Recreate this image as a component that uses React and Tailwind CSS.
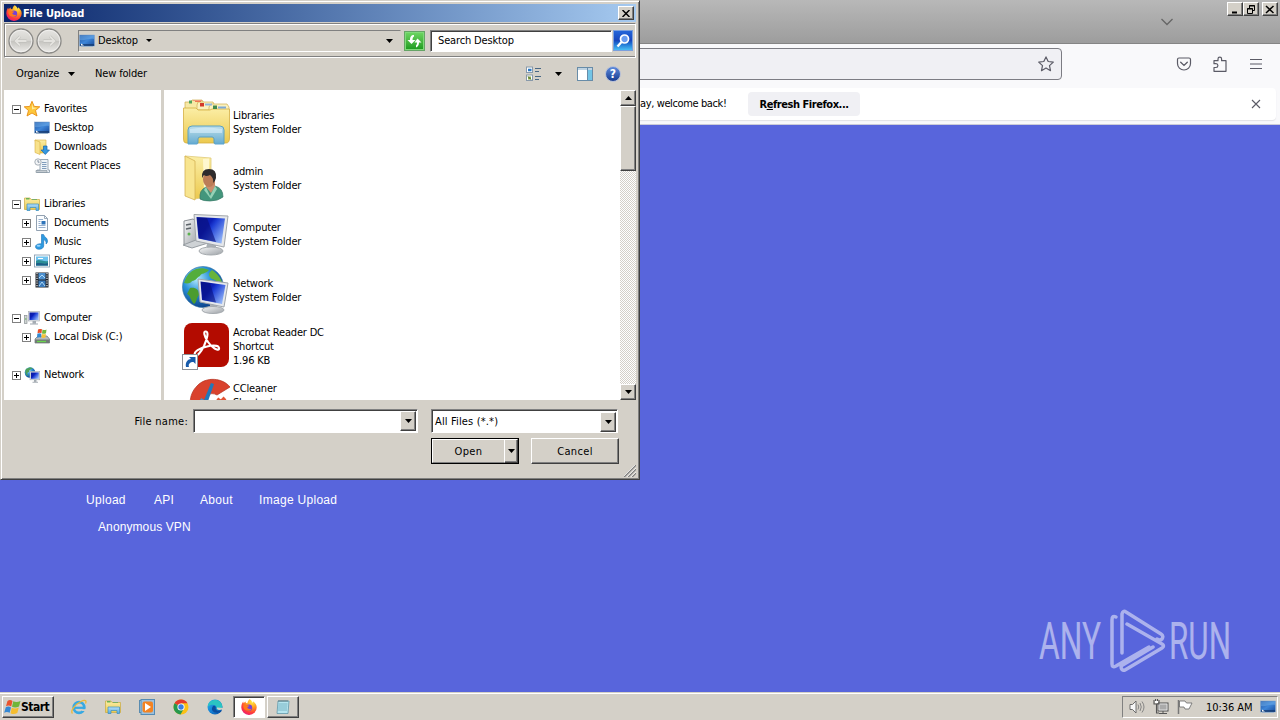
import React from "react";

const ui = "font-['DejaVu_Sans_Condensed','DejaVu_Sans',sans-serif] text-[11px] leading-[14px] text-black whitespace-nowrap";
const raised = "border border-t-white border-l-white border-r-[#404040] border-b-[#404040] bg-[#d4d0c8] shadow-[inset_-1px_-1px_0_#808080]";
const sunken = "border border-t-[#808080] border-l-[#808080] border-r-white border-b-white shadow-[inset_1px_1px_0_#404040]";

const Svg = ({ s = 16, w, h, className = "", children, vb }) => (
  <svg width={w || s} height={h || s} viewBox={vb || `0 0 ${s} ${s}`} className={`block shrink-0 ${className}`} fill="none">{children}</svg>
);

const Down = ({ className = "" }) => (
  <Svg w={7} h={4} vb="0 0 7 4" className={className}><path d="M0 0H7L3.5 4Z" fill="#000" /></Svg>
);

const Defs = () => (
  <svg width="0" height="0" className="absolute">
    <defs>
      <linearGradient id="screen" x1="0" y1="0" x2="1" y2="0.7"><stop offset="0" stopColor="#0a1a9c" /><stop offset=".42" stopColor="#0c1fb8" /><stop offset=".55" stopColor="#1f40d6" /><stop offset="1" stopColor="#8fb2f6" /></linearGradient>
      <linearGradient id="desk" x1="0" y1="0" x2="1" y2="1"><stop offset="0" stopColor="#1c4f9e" /><stop offset=".5" stopColor="#3f86d8" /><stop offset="1" stopColor="#174a9b" /></linearGradient>
      <linearGradient id="folder" x1="0" y1="0" x2="0" y2="1"><stop offset="0" stopColor="#fbeea6" /><stop offset="1" stopColor="#ecc94e" /></linearGradient>
      <linearGradient id="stand" x1="0" y1="0" x2="0" y2="1"><stop offset="0" stopColor="#b5def7" /><stop offset="1" stopColor="#58a9df" /></linearGradient>
      <radialGradient id="globe" cx=".35" cy=".3" r=".75"><stop offset="0" stopColor="#b4ecff" /><stop offset=".45" stopColor="#2a92d8" /><stop offset="1" stopColor="#0a3c86" /></radialGradient>
      <radialGradient id="foxr" cx=".7" cy=".15" r=".95"><stop offset="0" stopColor="#fff04a" /><stop offset=".4" stopColor="#ff9a1f" /><stop offset=".75" stopColor="#ff3b3b" /><stop offset="1" stopColor="#e31587" /></radialGradient>
      <linearGradient id="edge" x1="0" y1="0" x2="1" y2="1"><stop offset="0" stopColor="#2fb7e8" /><stop offset=".5" stopColor="#1481d6" /><stop offset="1" stopColor="#0b4ea2" /></linearGradient>
      <linearGradient id="silver" x1="0" y1="0" x2="1" y2="1"><stop offset="0" stopColor="#f6f7f8" /><stop offset="1" stopColor="#9ba0a5" /></linearGradient>
      <linearGradient id="navbtn" x1="0" y1="0" x2="0" y2="1"><stop offset="0" stopColor="#e6e5e2" /><stop offset=".48" stopColor="#d4d3cf" /><stop offset=".52" stopColor="#c6c5c1" /><stop offset="1" stopColor="#eeedea" /></linearGradient>
    </defs>
  </svg>
);

const Firefox = ({ s = 16 }) => (
  <Svg s={s} vb="0 0 16 16">
    <path d="M8.600 .3c1.900 1 2.700 2.400 3 3.600l.4-1.700c2.200 1.500 3.700 3.600 3.700 6.200A7.600 7.600 0 0 1 8 16 7.600 7.600 0 0 1 .3 8.500c0-2.600.8-4.500 1.900-6l.4 1.800c.6-.8 1.300-1.400 2.300-1.800l-.2 1.500 1.700.2c.3-1.500 1-3 2.200-3.900z" fill="url(#foxr)" />
    <circle cx="8" cy="8.700" r="3.200" fill="#7540d8" />
    <path d="M2.500 6.200c1.100-.8 2.600-.7 3.700 0l2 .3c.3.8-1.900 1.100-1.900 2 .4 1.500 2.700 1.900 4.300.9-.7 2.400-4 3.100-6.200 1.600C2.700 10 2.200 8 2.500 6.200Z" fill="#ff7a1a" />
  </Svg>
);
const Desktop = () => (
  <Svg><rect x=".5" y="2" width="15" height="11" fill="url(#desk)" stroke="#89a9cd" strokeWidth=".6" /><path d="M1 2.500H15V6C10 5 5 8 1 7Z" fill="#72afea" opacity=".5" /><path d="M1 12H15" stroke="#163b70" strokeWidth="1.500" /><path d="M2 10.500L5 12.500H2Z" fill="#fff" /><path d="M2 13.500H14" stroke="#9bb3cc" /></Svg>
);
const Star = () => (
  <Svg><path d="M8 .3L10.200 5.400L15.800 5.800L11.500 9.500L13 15L8 12L3 15L4.500 9.500L.2 5.800L5.800 5.400Z" fill="#fdc73c" stroke="#e88d13" strokeWidth=".9" /><path d="M8 2.500L9.200 6.500L13 7L8 8.500Z" fill="#ffeba0" /></Svg>
);
const Downloads = () => (
  <Svg><path d="M1 1H12V14H4Z" fill="url(#folder)" stroke="#d9b042" strokeWidth=".6" /><path d="M1 1L6 3V15.500L1 13.500Z" fill="#f8e28c" stroke="#d9b042" strokeWidth=".6" /><path d="M9.500 7H13V11H15.500L11.300 15.500L7 11H9.500Z" fill="#3498e0" stroke="#1766ac" strokeWidth=".7" /></Svg>
);
const Recent = () => (
  <Svg><path d="M6 1.500H14V12H15.500V14.500H3V12H6Z" fill="#eef3f8" stroke="#8798a8" strokeWidth=".8" /><path d="M8 4.500H12.500M8 6.500H12.500M8 8.500H12.500M8 10.500H12.500" stroke="#6487ac" strokeWidth=".8" /><path d="M2 12.500H13V14.500H2Z" fill="#c5ccd2" stroke="#808d99" strokeWidth=".6" /><circle cx="4" cy="4" r="3.200" fill="#f3f5f7" stroke="#949ea8" strokeWidth=".8" /><path d="M4 2V4.200H5.500" stroke="#56677c" strokeWidth=".7" /></Svg>
);
const LibSmall = () => (
  <Svg><path d="M.5 2H6L7 3.500H15.500V13.500H.5Z" fill="url(#folder)" stroke="#c9a941" strokeWidth=".7" /><path d="M2 2.800H5.500" stroke="#4aa84a" strokeWidth="1.200" /><path d="M8 3.500H13" stroke="#7cae64" strokeWidth="1" /><path d="M3 8H14.500V14.500H12V11.500H6V14.500H3Z" fill="url(#stand)" stroke="#398fbe" strokeWidth=".7" /></Svg>
);
const Doc = () => (
  <Svg><path d="M2.500 .5H10.500L13.500 3.500V15.500H2.500Z" fill="#fbfdff" stroke="#8797a9" strokeWidth=".9" /><path d="M10.500 .5V3.500H13.500" stroke="#8797a9" strokeWidth=".8" /><path d="M4.500 4.500H9M4.500 6.500H6.500M4.500 8.500H6.500M4.500 10.500H11.500M4.500 12.500H11.500" stroke="#7f9cc0" strokeWidth=".8" /><rect x="7.500" y="6" width="4" height="3.500" fill="#2e74ba" /></Svg>
);
const Music = () => (
  <Svg><path d="M7.500 .5H9.500C10 3 13.500 3.500 13.500 7C13.500 8.500 12.800 9.500 12 10C12.600 7.500 11 6 9.700 5.600V12C9.500 14 7.500 15.300 5 15.300C2.800 15.300 1.500 14.300 1.500 12.800C1.500 11 3.500 9.500 7.500 9.800Z" fill="#2e9ae0" stroke="#1671b8" strokeWidth=".6" /><ellipse cx="4.600" cy="11.800" rx="2" ry="1" fill="#95d4ff" /></Svg>
);
const Pictures = () => (
  <Svg><rect x=".5" y="2" width="15" height="12" fill="#fff" stroke="#8aa0b4" strokeWidth=".9" /><rect x="2" y="3.500" width="12" height="9" fill="#6fc3ef" /><path d="M2 8C5 5.500 9 9 14 8V12.500H2Z" fill="#2c8e96" /><path d="M2 10.500C6 9 10 12 14 10V12.500H2Z" fill="#1d5d87" /><path d="M4 5.500H9" stroke="#fff" /></Svg>
);
const Videos = () => (
  <Svg><rect x="1.500" y=".5" width="13" height="15" fill="#20242b" /><rect x="4.500" y="1" width="7" height="6.500" fill="#4d90cf" /><rect x="4.500" y="8.500" width="7" height="6.500" fill="#3a7abb" /><path d="M5 6L8 3L11 6M5 14L8 10L11 14" stroke="#b1dbf6" /><path d="M3 1V15.500M13 1V15.500" stroke="#eee" strokeWidth="1.200" strokeDasharray="1.200 1.200" /></Svg>
);
const PcSmall = () => (
  <Svg><rect x="0.500" y="5.500" width="2.500" height="8" fill="#cfd6d2" stroke="#8a9196" strokeWidth=".7" /><path d="M1 9H2.500" stroke="#5bb24d" /><path d="M8.500 11H12V14H8.500Z" fill="#a4abb2" /><path d="M6 14H14" stroke="#b4bac0" strokeWidth="1.300" /><rect x="4.500" y="1.500" width="11" height="9.500" fill="#dfe3e8" stroke="#a5abb1" strokeWidth=".6" /><rect x="5.500" y="2.500" width="9" height="7.500" fill="url(#screen)" /></Svg>
);
const NetSmall = () => (
  <Svg><circle cx="6" cy="5.500" r="5.300" fill="url(#globe)" /><path d="M2 2C4 .5 7 0 9 1C7 2.500 5 2.500 5 5L3 6L4.500 9C1.500 8 .5 5 2 2Z" fill="#4da05a" /><path d="M10 12H12.500V15H10Z" fill="#a4abb2" /><path d="M8.500 15.300H14" stroke="#b4bac0" strokeWidth="1.200" /><rect x="6" y="4.500" width="9.800" height="8.300" fill="#dfe3e8" stroke="#a5abb1" strokeWidth=".6" /><rect x="7" y="5.500" width="7.800" height="6.300" fill="url(#screen)" /></Svg>
);
const Pc = () => (
  <Svg s={48}>
    <path d="M2 11L11 9L16 12V32L7 37L2 34Z" fill="url(#silver)" stroke="#8c9196" />
    <path d="M4 15L9 14M4 19L9 18" stroke="#5d646a" strokeWidth="1.500" /><circle cx="7" cy="24" r="1.500" fill="#5cb24f" />
    <path d="M1 35L14 30L26 33L10 38Z" fill="#ced2d5" stroke="#979da2" />
    <path d="M25 33L34 35V40H24Z" fill="#aab0b5" />
    <ellipse cx="29" cy="41" rx="12" ry="4" fill="url(#silver)" stroke="#a4a9ad" />
    <path d="M12 4.500L46 6L42 37L14 31Z" fill="#e5e7ea" stroke="#a1a6ab" />
    <path d="M14.500 7L43 8.500L39.500 33.500L16.500 28.500Z" fill="url(#screen)" />
    <path d="M15 7.500L25 8L34 32L17 28.300Z" fill="#09107e" opacity=".65" />
  </Svg>
);
const Disk = () => (
  <Svg><path d="M1 10L4 7H13L15.500 10V14H1Z" fill="#b5babd" stroke="#6c7478" strokeWidth=".7" /><path d="M1 10.500H15.500V14H1Z" fill="#717b76" /><path d="M3 12.500H12" stroke="#69d54d" strokeWidth="1.300" /><path d="M4 .5Q6 -.5 8 .3L7.500 4.200Q5.500 3.300 3.500 4.300Z" fill="#e8512b" /><path d="M8.500 .5Q10.500 1.500 12.500 .5L12 4.300Q10 5.300 8 4.400Z" fill="#75b83b" /><path d="M3.300 4.800Q5.300 3.900 7.400 4.800L7 8.500Q5 7.700 3 8.700Z" fill="#3189d2" /><path d="M7.900 4.900Q10 5.800 11.900 4.900L11.400 8.600Q9.500 9.500 7.500 8.600Z" fill="#f6c337" /></Svg>
);
const Net = () => (
  <Svg s={48}>
    <circle cx="21" cy="21" r="20.500" fill="url(#globe)" stroke="#2d6f9f" strokeWidth=".6" />
    <path d="M10 5C14 2 21 1 27 4C24 8 19 7 18 10C15 11 14 15 10 15C9 17 6 18 2 17C4 11 6 8 10 5Z" fill="#54ad3b" />
    <path d="M30 4C36 8 40 13 41 20C36 18 35 14 30 13C26 10 26 7 30 4Z" fill="#68b43b" /><path d="M8 22C13 21 17 23 17 29C14 32 15 36 12 38C8 34 9 30 5 28Z" fill="#4b9c2f" />
    <path d="M28 37H35V43H28Z" fill="#adb2b7" /><ellipse cx="31" cy="44" rx="11" ry="3.500" fill="url(#silver)" stroke="#a5aaaf" />
    <path d="M16 13L46 17L42 41L18 36Z" fill="#e5e8ec" stroke="#9fa5ab" />
    <path d="M18.500 15.500L43.500 19L40 38L20 34Z" fill="url(#screen)" /><path d="M19 16L28 17L34 36.500L20.500 33.800Z" fill="#09107e" opacity=".6" />
  </Svg>
);

const LibBig = () => (
  <Svg s={48}>
    <path d="M3 4H9L10 2H20L22 5V12H3Z" fill="#f7e9a5" stroke="#cfae4e" strokeWidth=".7" />
    <path d="M15 7L16 4H31L33 8V12H15Z" fill="#fbf1bd" stroke="#cfae4e" strokeWidth=".7" />
    <path d="M27 9L29 6H45L47 9V14H27Z" fill="#fbf1bd" stroke="#cfae4e" strokeWidth=".7" />
    <path d="M1.500 10H14L16 12H28L30 11H47.500V40Q47.500 45 44 45H4Q1.500 45 1.500 41Z" fill="url(#folder)" stroke="#d4af43" strokeWidth=".8" />
    <path d="M11 2.500H20" stroke="#ef9a7a" strokeWidth="1" /><rect x="7" y="2.500" width="3" height="3" fill="#51a35b" /><path d="M13 3.500H19" stroke="#ef7651" strokeWidth="1" /><rect x="18" y="5" width="4" height="3.500" fill="#d3382a" /><path d="M23 6.500H30" stroke="#92b5da" strokeWidth="2" /><rect x="31" y="7.500" width="4" height="3.500" fill="#428a4d" /><path d="M36 9.500H44" stroke="#7faad4" strokeWidth="2" />
    <path d="M10 28H38Q42 28 42 32V46H33Q32 46 32 44V41Q32 39 30 39H18Q16 39 16 41V44Q16 46 15 46H6V32Q6 28 10 28Z" fill="url(#stand)" stroke="#4b9ccc" opacity=".9" />
    <path d="M8 31Q24 28 40 31V35H8Z" fill="#e1f4ff" opacity=".55" />
  </Svg>
);
const Admin = () => (
  <Svg s={48}>
    <path d="M3 2L29 4V42L13 45Z" fill="url(#folder)" stroke="#e0ca7a" strokeWidth=".8" />
    <path d="M21 5L27 4.500V38H22Z" fill="#fff7ce" />
    <path d="M3 2L13 7V46L3 42Z" fill="#f8e590" stroke="#d4b354" strokeWidth=".8" />
    <path d="M18 45Q17 36 24 33L33 32Q41 34 41 43Q36 47 28 47Q21 47 18 45Z" fill="#43967c" stroke="#397a69" strokeWidth=".7" />
    <path d="M24 33L29 39L33 33V27H24Z" fill="#c98e6d" /><path d="M24 33L28 42L33 32L35 35L29 45L22 36Z" fill="#94d1b5" />
    <ellipse cx="27" cy="25.500" rx="6" ry="7.500" fill="#bc7c57" />
    <path d="M20 24Q19 15 27 15Q35 15 34 24Q33 28 31 29Q32 24 28 21Q24 23 22 21Z" fill="#2e2b2c" />
  </Svg>
);
const Acrobat = () => (
  <Svg s={48}>
    <rect x="2" y="1" width="45" height="44" rx="8" fill="#b30b00" />
    <path d="M13 33C11 30 18 26 25 24.500C33 22.500 38 24 37 27C36 29 30 26 26 20C22 14 21 9 24 9.500C27 10 25 17 22 24C19 30 15 35 13 33Z" stroke="#fff" strokeWidth="2.100" />
    <g><rect x=".5" y="32.500" width="15" height="15" fill="#fff" stroke="#8d9298" /><path d="M4 45C3 40 6 37 9 37L7 35H13.500V42L11.500 40C8 40 6 42 7 45Z" fill="#175bab" /></g>
  </Svg>
);
const CCleaner = () => (
  <Svg s={48}>
    <path d="M48 9C41 0 24 -2 15 8C6 17 7 30 12 38L23 28C21 18 28 13 35 17Z" fill="#d9422d" stroke="#b3301f" strokeWidth=".7" />
    <path d="M29 5L32 6L24 29L20 27Z" fill="#2278ba" /><path d="M19 20L27 25L22 40H11Z" fill="#3f93cf" />
    <path d="M20 24L16 35" stroke="#c0e2f7" strokeWidth="2" /><path d="M35 21L39 24L43 20" stroke="#e25435" strokeWidth="4" />
  </Svg>
);

const tree = [
  { n: "Favorites", i: Star, e: "-", l: 0 },
  { n: "Desktop", i: Desktop, l: 1 },
  { n: "Downloads", i: Downloads, l: 1 },
  { n: "Recent Places", i: Recent, l: 1 },
  null,
  { n: "Libraries", i: LibSmall, e: "-", l: 0 },
  { n: "Documents", i: Doc, e: "+", l: 1 },
  { n: "Music", i: Music, e: "+", l: 1 },
  { n: "Pictures", i: Pictures, e: "+", l: 1 },
  { n: "Videos", i: Videos, e: "+", l: 1 },
  null,
  { n: "Computer", i: PcSmall, e: "-", l: 0 },
  { n: "Local Disk (C:)", i: Disk, e: "+", l: 1 },
  null,
  { n: "Network", i: NetSmall, e: "+", l: 0 },
];

const files = [
  { i: LibBig, t: ["Libraries", "System Folder"] },
  { i: Admin, t: ["admin", "System Folder"] },
  { i: Pc, t: ["Computer", "System Folder"] },
  { i: Net, t: ["Network", "System Folder"] },
  { i: Acrobat, t: ["Acrobat Reader DC", "Shortcut", "1.96 KB"] },
  { i: CCleaner, t: ["CCleaner", "Shortcut", "\u00a0"] },
];

const Expander = ({ e }) => (
  <Svg s={9}><rect x=".5" y=".5" width="8" height="8" fill="#fff" stroke="#808080" /><path d={e === "+" ? "M2 4.500H7M4.500 2V7" : "M2 4.500H7"} stroke="#000" /></Svg>
);

const NavButton = ({ d }) => (
  <Svg s={26}><circle cx="13" cy="13" r="12" fill="url(#navbtn)" stroke="#8b8a87" strokeWidth="1.300" /><circle cx="13" cy="13" r="10.800" stroke="#f4f3f1" strokeWidth=".8" /><path d={d} stroke="#bcbbb7" strokeWidth="2.800" /><path d={d} stroke="#e4e3df" strokeWidth="1.800" /></Svg>
);

const ScrollButton = ({ up }) => (
  <div className={`${raised} flex h-4 w-4 shrink-0 items-center justify-center`}><Down className={up ? "rotate-180" : ""} /></div>
);

const Combo = ({ className, children }) => (
  <div className={`${sunken} ${className} flex h-[24px] items-center justify-between bg-white pl-[3px] pr-px`}>
    <span>{children}</span>
    <div className={`${raised} flex h-[20px] w-[16px] items-center justify-center`}><Down /></div>
  </div>
);

const Dialog = () => (
  <div className={`${ui} absolute left-0 top-0 flex h-[480px] w-[640px] flex-col border border-b-[#404040] border-l-[#d4d0c8] border-r-[#404040] border-t-[#d4d0c8] bg-[#d4d0c8] px-[3px] pt-[3px] shadow-[inset_1px_1px_0_#fff,inset_-1px_-1px_0_#808080]`}>
    <div className="flex h-[18px] shrink-0 items-center bg-linear-to-r from-[#0a246a] to-[#a6caf0] pl-[2px] pr-[2px]">
      <Firefox />
      <span className="ml-px flex-1 pt-px font-bold tracking-[-0.15px] text-white">File Upload</span>
      <div className={`${raised} flex h-[14px] w-4 items-center justify-center`}><Svg w={8} h={7} vb="0 0 8 7"><path d="M.5 0L7.500 7M7.500 0L.5 7" stroke="#000" strokeWidth="1.500" /></Svg></div>
    </div>
    <div className="mt-px flex h-[35px] shrink-0 items-center border border-b-white border-l-[#808080] border-r-white border-t-[#808080] pl-[3px] shadow-[inset_0_-1px_0_#808080,inset_1px_1px_0_#fff]">
      <div className="flex items-center gap-[2px]">
        <NavButton d="M18.500 13H8M12 8.500L7.500 13L12 17.500" />
        <NavButton d="M7.500 13H18M14 8.500L18.500 13L14 17.500" />
      </div>
      <div className="ml-4 flex h-[22px] w-[323px] items-center border border-b-white border-l-[#808080] border-r-transparent border-t-[#808080]">
        <Desktop />
        <span className="ml-[3px] w-[48px] tracking-[-0.15px]">Desktop</span>
        <Svg w={6} h={3} vb="0 0 6 3"><path d="M0 0H6L3 3Z" fill="#000" /></Svg>
        <Down className="ml-auto mr-[7px]" />
      </div>
      <div className="ml-[3px] h-[20px] w-[21px] shrink-0 border border-[#65a466] bg-linear-to-b from-[#6ed763] to-[#169a1c] shadow-[inset_0_0_0_1px_#7fda79]">
        <Svg w={19} h={18} vb="0 0 19 18"><path d="M9 3C6 3 5 5 5 8H2.500L6.500 12L10.500 8H7.500C7.500 6 8 5 9 4.500ZM11 15.500C13 14.500 14 13 14 10.500H16.500L12.500 6.500L9.500 10.500H12C12 12.500 11.500 13 11 13.500Z" fill="#fff" /></Svg>
      </div>
      <div className={`${sunken} ml-[5px] flex h-[22px] w-[182px] shrink-0 items-center bg-white pl-[7px] tracking-[-0.15px]`}>Search Desktop</div>
      <div className="ml-px flex h-[21px] w-[20px] shrink-0 items-center justify-center border border-[#7b9fdc] bg-linear-to-b from-[#2465d9] via-[#1746bd] to-[#49bdf4]">
        <Svg s={16}><circle cx="9.500" cy="6" r="4" fill="#6a9df0" stroke="#fff" strokeWidth="1.700" /><path d="M6.500 9L2.500 13.500" stroke="#fff" strokeWidth="2.300" /></Svg>
      </div>
    </div>
    <div className="flex h-[32px] shrink-0 items-center pl-[12px]">
      <span className="w-[52px] tracking-[-0.15px]">Organize</span><Down />
      <span className="ml-5 tracking-[-0.15px]">New folder</span>
      <Svg className="ml-auto"><rect x=".5" y="1" width="6" height="5.500" fill="#fff" stroke="#8899aa" /><path d="M2 4H5.500" stroke="#2a78c4" strokeWidth="2.500" /><rect x=".5" y="9" width="6" height="5.500" fill="#fff" stroke="#8899aa" /><path d="M2 10.500H5V13.500H2Z" fill="#8da84b" /><path d="M2 10.500L5 13.500" stroke="#4c6e31" /><path d="M9 2.500H15M9 5.500H13M9 10.500H15M9 13.500H13" stroke="#486785" /></Svg>
      <Down className="ml-[13px]" />
      <Svg className="ml-[15px]"><rect x=".5" y="1.500" width="15" height="13" fill="#fff" stroke="#688ca8" /><path d="M1 3H15" stroke="#aac4d8" strokeWidth="1.500" /><path d="M10.500 2V14" stroke="#688ca8" /><rect x="11" y="4" width="4" height="10" fill="#72c4e5" /></Svg>
      <div className="ml-[12px] mr-[15px] flex h-4 w-4 items-center justify-center rounded-full border border-[#b5bfd8] bg-linear-to-b from-[#5f8bdc] to-[#173b90] text-[12px] font-bold text-white">?</div>
    </div>
    <div className="flex h-[310px] shrink-0 bg-white tracking-[-0.18px]">
      <div className="w-[160px] shrink-0 border-r-[3px] border-[#d4d0c8] pt-[9px]">
        {tree.map((r, k) => (
          <div key={k} className={`flex h-[19px] items-center ${r && r.l ? "pl-[18px]" : "pl-[8px]"}`}>
            {r && (<>
              <span className="w-3 shrink-0 pt-px">{r.e && <Expander e={r.e} />}</span>
              <r.i /><span className="ml-[4px] pt-px">{r.n}</span>
            </>)}
          </div>
        ))}
      </div>
      <div className="flex-1 overflow-hidden pl-[18px] pt-[4px]">
        {files.map((f, k) => (
          <div key={k} className="flex h-[56px] items-center gap-[3px]"><f.i /><div className="pt-px">{f.t.map((t) => <div key={t}>{t}</div>)}</div></div>
        ))}
      </div>
      <div className="flex w-4 shrink-0 flex-col bg-[repeating-conic-gradient(#ffffff_0_25%,#d4d0c8_0_50%)] bg-[length:2px_2px]">
        <ScrollButton up />
        <div className={`${raised} h-[65px]`} />
        <div className="mt-auto"><ScrollButton /></div>
      </div>
    </div>
    <div className="flex pt-[9px]">
      <span className="w-[189px] pr-[5px] pt-[6px] text-right tracking-[0.25px]">File name:</span>
      <Combo className="w-[225px]" />
      <Combo className="ml-[13px] w-[187px] pt-px tracking-[0.15px]">All Files (*.*)</Combo>
    </div>
    <div className="flex pl-[427px] pt-[5px]">
      <div className="flex h-[26px] w-[88px] border border-black">
        <div className="flex w-[72px] items-center justify-center border-b border-l border-t border-b-[#808080] border-l-white border-t-white pt-px tracking-[0.35px]">Open</div>
        <div className={`${raised} flex flex-1 items-center justify-center`}><Down className="shrink-0" /></div>
      </div>
      <div className={`${raised} ml-[12px] flex h-[26px] w-[88px] items-center justify-center pt-px tracking-[0.35px]`}>Cancel</div>
    </div>
    <Svg s={12} className="ml-auto mt-px shrink-0"><path d="M0 12L12 0M4 12L12 4M8 12L12 8" stroke="#808080" strokeWidth="1.500" /><path d="M-1 12L11 0M3 12L12 3M7 12L12 7" stroke="#fff" strokeWidth=".7" /></Svg>
  </div>
);

const CaptionButton = ({ children, className = "" }) => (
  <div className={`${raised} flex h-[14px] w-4 items-center justify-center ${className}`}><Svg w={10} h={9} vb="0 0 10 9">{children}</Svg></div>
);

const Browser = () => (
  <>
    <div className="flex h-[44px] shrink-0 items-start justify-end border-b border-[#858585] bg-linear-to-b from-[#b8b8b8] to-[#9d9d9d] pr-[2px] pt-[2px]">
      <Svg s={14} className="mr-[53px] mt-[13px]"><path d="M1.500 4L7 9.500L12.500 4" stroke="#666" strokeWidth="1.300" /></Svg>
      <CaptionButton><path d="M2 7.500H7" stroke="#000" strokeWidth="2" /></CaptionButton>
      <CaptionButton><path d="M3.500 3V.5H8.500V5.500H6.500M1.500 3.500H6.500V8.500H1.500ZM3 1H9M1 4H7" stroke="#000" /></CaptionButton>
      <CaptionButton className="ml-[3px]"><path d="M1 1L8.500 8M8.500 1L1 8" stroke="#000" strokeWidth="1.500" /></CaptionButton>
    </div>
    <div className="flex h-[40px] shrink-0 items-center bg-[#f9f9fb] pl-[560px]">
      <div className="flex h-[32px] w-[502px] items-center justify-end rounded-[4px] border border-[#7c7c83] bg-[#f0f0f4] pr-[7px]">
        <Svg s={16}><path d="M8 .9L10.200 5.500L15.300 6.100L11.500 9.600L12.500 14.700L8 12.100L3.500 14.700L4.500 9.600L.7 6.100L5.800 5.500Z" stroke="#5b5b66" strokeWidth="1.200" strokeLinejoin="round" /></Svg>
      </div>
      <Svg s={16} className="ml-[114px]"><path d="M1.500 3.500Q1.500 2 3 2H13Q14.500 2 14.500 3.500V7.500A6.500 6.500 0 0 1 1.500 7.500Z" stroke="#5b5b66" strokeWidth="1.200" /><path d="M4.700 6.200L8 9.400L11.300 6.200" stroke="#5b5b66" strokeWidth="1.300" strokeLinecap="round" /></Svg>
      <Svg s={16} className="ml-[20px]"><path d="M2 15.300V11.500H4A1.900 1.900 0 0 0 4 7.700H2V4.700H6V3A1.800 1.800 0 0 1 9.600 3V4.700H14V15.300Z" stroke="#5b5b66" strokeWidth="1.200" strokeLinejoin="round" /></Svg>
      <Svg s={16} className="ml-[20px]"><path d="M2 3.500H14M2 8H14M2 12.500H14" stroke="#5b5b66" strokeWidth="1.200" /></Svg>
    </div>
    <div className="flex h-[41px] shrink-0 border-b border-[#ccccd8] bg-[#f9f9fb] px-1 pb-1 pt-[4px]">
      <div className={`${ui} flex flex-1 items-center rounded bg-white pl-[636px] shadow-[0_1px_1px_#e2e2e6]`}>
        <span className="w-[108px] pb-px tracking-[-0.38px]">ay, welcome back!</span>
        <div className="flex h-[24px] w-[112px] items-center justify-center rounded-[4px] bg-[#f0f0f4] pt-px font-bold tracking-[-0.45px]"><span>R<span className="underline">e</span>fresh Firefox...</span></div>
        <Svg s={10} className="ml-auto mr-[15px]"><path d="M1 1L9 9M9 1L1 9" stroke="#5b5b66" strokeWidth="1.100" /></Svg>
      </div>
    </div>
    <div className="flex flex-1 flex-col bg-[#5865dc] pl-[86px] pt-[367px] font-['Liberation_Sans',sans-serif] text-[12px] leading-[16px] text-white">
      <div className="flex tracking-[0.3px]">
        <span className="w-[68px]">Upload</span><span className="w-[46px]">API</span><span className="w-[59px]">About</span><span>Image Upload</span>
      </div>
      <div className="ml-[12px] mt-[11px] tracking-[0.1px]">Anonymous VPN</div>
    </div>
  </>
);

const Watermark = () => (
  <Svg w={215} h={70} vb="0 0 215 70" className="absolute left-[1035px] top-[605px] overflow-visible opacity-50">
    <g fill="#fff" fontFamily="Roboto, sans-serif" fontWeight="400" fontSize="52">
      <text x="4" y="54" textLength="62" lengthAdjust="spacingAndGlyphs">ANY</text>
      <text x="134" y="54" textLength="62" lengthAdjust="spacingAndGlyphs">RUN</text>
    </g>
    <g stroke="#fff" strokeWidth="3.500" strokeLinejoin="round" strokeLinecap="round">
      <path d="M87 48V9Q88 5 91 7L126 29Q129 31 127 34Q125 36 122 34M92 19L127 39Q130 41 127 43L90 65Q86 66 86 61L118 42" />
      <path d="M81 12Q77 10 77 15V59Q77 63 81 61L114 42" />
    </g>
  </Svg>
);

const WinLogo = () => (
  <Svg s={17} vb="0 0 17 17"><path d="M3.500 2Q6 .2 8.500 2L7.200 7.500Q4.700 5.800 2 7.300Z" fill="#e9532d" /><path d="M9.300 2.300Q12.500 4 16.500 2L15 7.500Q11.500 9.300 8 7.800Z" fill="#70b53a" /><path d="M1.800 8.200Q4.500 6.700 7 8.400L5.700 13.800Q3 12.200 .2 13.700Z" fill="#3588d4" /><path d="M7.800 8.700Q11.300 10.300 14.800 8.400L13.300 14Q9.700 16 6.500 14.200Z" fill="#f5bd30" /></Svg>
);

const Slot = ({ children }) => <div className="flex w-[34px] shrink-0 items-center justify-center">{children}</div>;

const Taskbar = () => (
  <div className={`${ui} flex h-[28px] shrink-0 border-t border-[#d4d0c8] bg-[#d4d0c8] shadow-[inset_0_1px_0_#fff]`}>
    <div className={`${raised} ml-[2px] mt-[3px] flex h-[22px] w-[52px] items-center pl-px text-[12px] font-bold tracking-[-0.5px]`}><WinLogo />Start</div>
    <div className="ml-[8px] flex">
      <Slot><Svg><circle cx="8" cy="8.500" r="5.300" stroke="#38a9e2" strokeWidth="2.800" /><path d="M3 8.800H13.500" stroke="#38a9e2" strokeWidth="2.200" /><path d="M11 10.200H16V12H11Z" fill="#d4d0c8" /><path d="M1.500 14.500C-1 12 4 5.500 10 2.500C14 .5 16 1.500 14.500 4.500" stroke="#edb838" strokeWidth="1.300" /></Svg></Slot>
      <Slot><LibSmall /></Slot>
      <Slot><Svg><rect x=".5" y="1.500" width="12" height="12" fill="#b8d7ec" stroke="#5a8cb0" /><rect x="2" y=".5" width="13.500" height="15" fill="#9dc0dc" stroke="#548bb4" /><rect x="3.500" y="2.500" width="10.500" height="11" rx="2" fill="#f38322" /><path d="M6 4L12 8L6 12Z" fill="#fff" /></Svg></Slot>
      <Slot><Svg><circle cx="8" cy="8" r="7.500" fill="#fbc116" /><path d="M8 8L1.500 4.250A7.500 7.500 0 0 1 14.500 4.250H8Z" fill="#e33b2e" /><path d="M1.500 4.250A7.500 7.500 0 0 0 7.500 15.500L11 9.500L8 8Z" fill="#26984e" /><circle cx="8" cy="8" r="3.600" fill="#fff" /><circle cx="8" cy="8" r="2.700" fill="#397fe2" /></Svg></Slot>
      <Slot><Svg><circle cx="8" cy="8" r="7.500" fill="url(#edge)" /><path d="M.7 7.500C1.500 2 7 .2 11 1.500C15 3 16.500 8 14 10.500C12 12 8.500 10.500 9.500 9C10 6 5 4 .7 7.500Z" fill="#2bc4c2" /><path d="M6 7C2.500 12 8 15 13.500 13C14.600 12.400 15 11.600 14.500 11.600C11 13.300 8 11 8.800 8.500C8.500 7 7.500 6.300 6 7Z" fill="#0b4d9e" /><path d="M10 8.500C9.500 10.500 12 11.500 14.500 10.500L16 12V9Z" fill="#d4d0c8" /></Svg></Slot>
    </div>
    <div className={`${sunken} ml-px mt-[3px] flex h-[22px] w-[32px] items-center justify-center bg-white`}><Firefox /></div>
    <div className={`${raised} ml-[2px] mt-[3px] flex h-[22px] w-[32px] items-center justify-center`}><Svg><path d="M3 2H14L13 14.500H2Z" fill="#b6e5ef" stroke="#538fa3" strokeWidth=".7" /><path d="M3.500 5H12.500M3.300 7H12.300M3.100 9H12M3 11H12" stroke="#62a1b4" strokeWidth=".7" /><path d="M4 1V3M6 1V3M8 1V3M10 1V3M12 1V3" stroke="#57727b" strokeWidth=".9" /></Svg></div>
    <div className="ml-auto mr-[2px] mt-[3px] flex h-[22px] w-[156px] items-center border border-b-white border-l-[#808080] border-r-white border-t-[#808080] pl-[6px]">
      <Svg><path d="M1 5.500H3.500L7 2V14L3.500 10.500H1Z" fill="#f7f7f7" stroke="#606060" strokeWidth=".9" /><path d="M9 5.500Q10.500 8 9 10.500M11 4Q13.500 8 11 12M13 2.500Q17 8 13 13.500" stroke="#7d7d7d" strokeWidth=".9" /></Svg>
      <Svg className="ml-[8px]"><rect x="5" y="4" width="10" height="8" fill="#aaa" stroke="#4e4e4e" /><rect x="6" y="5" width="8" height="6" stroke="#eee" strokeWidth=".8" /><path d="M6 14.500H14M10 12V14.500" stroke="#555" /><path d="M1 1V5H6V1M2.500 0V2M4.500 0V2M3.500 5V14H6" stroke="#555" strokeWidth="1.100" /><path d="M2 2H5V4H2Z" fill="#fff" /></Svg>
      <Svg className="ml-[8px]"><path d="M1.500 1V15" stroke="#777" strokeWidth="1.500" /><path d="M2.500 2H8L9.500 4H15L12 10H8L7 8H2.500Z" fill="#fff" stroke="#666" strokeWidth=".8" /></Svg>
      <span className="ml-[13px] w-[54px] pt-px tracking-[-0.05px]">10:36 AM</span>
      <Desktop />
    </div>
  </div>
);

export default function App() {
  return (
    <div className="relative flex h-[720px] w-[1280px] flex-col overflow-hidden bg-[#5865dc]">
      <Defs />
      <Browser />
      <Watermark />
      <Taskbar />
      <Dialog />
    </div>
  );
}
